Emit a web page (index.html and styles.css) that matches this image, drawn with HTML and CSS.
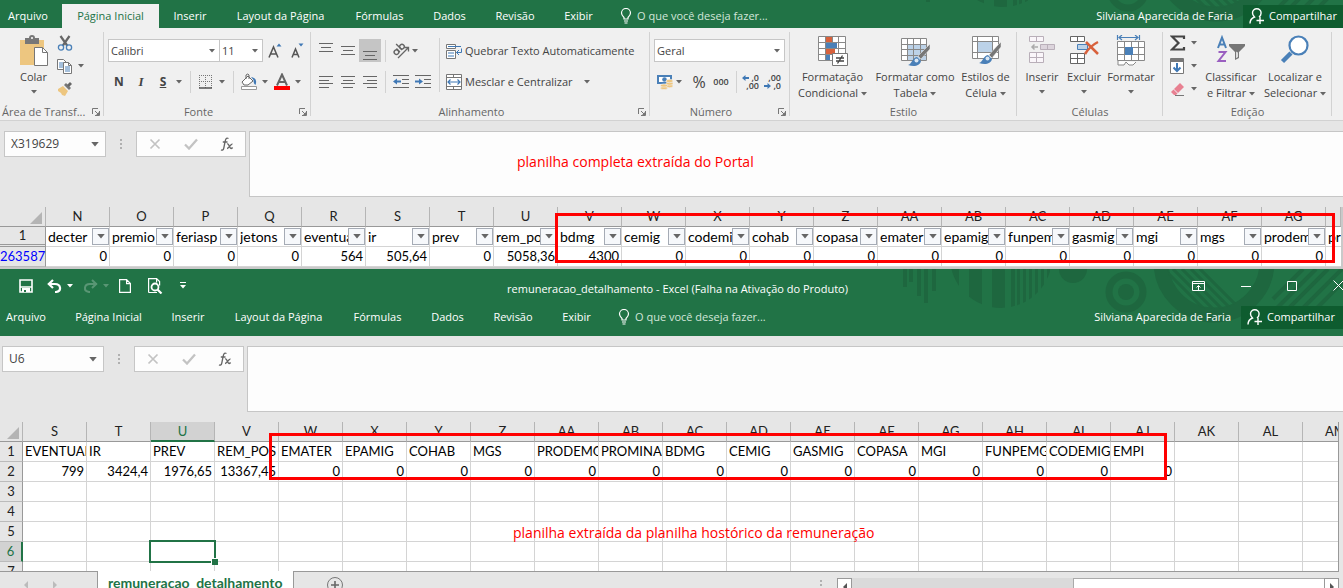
FILE: index.html
```html
<!DOCTYPE html>
<html lang="pt-BR">
<head>
<meta charset="utf-8">
<title>remuneracao_detalhamento - Excel</title>
<link rel="stylesheet" href="styles.css">
</head>
<body>
<svg class="defs" aria-hidden="true">
  <symbol id="down" viewBox="0 0 6 4"><path d="M0 0h6L3 3.500z" fill="currentColor"/></symbol>
  <symbol id="launch" viewBox="0 0 8 8"><path d="M.5 6V.5H6M3 3l3 3M7.500 3v4.500H3" fill="none" stroke="#777"/><path d="M7 4v3H4z" fill="#777"/></symbol>
  <symbol id="bulb" viewBox="0 0 12 16"><path d="M4 11V9.500C2.500 8 1.500 7 1.500 5a4.500 4.500 0 0 1 9 0c0 2-1 3-2.500 4.500V11zM4 13h4M4.500 15h3" fill="none" stroke="currentColor" stroke-width="1.200"/></symbol>
  <symbol id="person" viewBox="0 0 16 16"><path d="M1 15.500c0-4 2-5.500 4.500-6.500C4 7.500 3.500 6.500 3.500 5a4.300 4.300 0 0 1 8.600 0c0 1.500-.8 3-2.100 4M11 9v7M7.500 12.500H15" fill="none" stroke="currentColor" stroke-width="1.400"/></symbol>
  <symbol id="cancel" viewBox="0 0 12 12"><path d="M1.500 1.500l9 9M10.500 1.500l-9 9" stroke="#c3c3c3" stroke-width="1.700"/></symbol>
  <symbol id="check" viewBox="0 0 14 12"><path d="M1 6.500l4 4L13 1.500" fill="none" stroke="#c3c3c3" stroke-width="2.300"/></symbol>
  <symbol id="fx" viewBox="0 0 14 14"><path d="M8.500 1.500C6 .2 5.500 2.500 5 5L3.800 11c-.4 2-1.300 2.500-2.800 1.800M2.800 5h4.700M7 7c2-1 2.500 4.500 4 4.500.7 0 1.200-.5 1.600-1M12.500 7.200c-1.700-.6-3.500 4.300-5.500 4.300" fill="none" stroke="#666" stroke-width="1.300"/></symbol>
  <symbol id="corner" viewBox="0 0 12 12"><path d="M12 0v12H0z" fill="#b4b4b4"/></symbol>
  <symbol id="deco" viewBox="0 0 443 54">
    <clipPath id="disc"><circle cx="101" cy="-12" r="51"/></clipPath>
    <clipPath id="bigdisc"><circle cx="314" cy="-7" r="47"/></clipPath>
    <g fill="#1e673f" stroke="none">
      <path d="M3 0h4v18H3zM9 0h4v13H9zM17 0h4v27h-4zM24 0h4v34h-4zM32 0h4v22h-4z"/>
      <path clip-path="url(#disc)" d="M51 0h8v54h-8zM69 0h13v54H69zM92 0h13v54H92zM111 0h4v54h-4zM117 0h3v54h-3zM123 0h3v54h-3zM129 0h3v54h-3zM135 0h3v54h-3zM141 0h3v54h-3zM147 0h3v54h-3z"/>
      <circle cx="173" cy="0" r="14"/><circle cx="226" cy="23" r="8"/>
    </g>
    <g fill="none" stroke="#1e673f">
      <circle cx="226" cy="23" r="17" stroke-width="7"/>
      <circle cx="314" cy="-7" r="53" stroke-width="15"/>
      <path clip-path="url(#bigdisc)" stroke-width="3" d="M264 0l56 56M273 0l56 56M282 0l56 56M291 0l56 56M300 0l56 56"/>
      <path stroke-width="4" d="M373 30L403 0M373 43L416 0M374 54L428 0M388 54L442 0M402 54L443 13"/>
    </g>
  </symbol>
</svg>

<section class="window first">
  <header class="bar">
    <svg class="deco" aria-hidden="true"><use href="#deco"/></svg>
    <nav class="tabs">
      <button>Arquivo</button><button class="active">Página Inicial</button><button>Inserir</button><button>Layout da Página</button><button>Fórmulas</button><button>Dados</button><button>Revisão</button><button>Exibir</button>
    </nav>
    <button class="tell"><svg width="12" height="16"><use href="#bulb"/></svg>O que você deseja fazer...</button>
    <span class="user">Silviana Aparecida de Faria</span>
    <button class="share"><svg width="16" height="16"><use href="#person"/></svg>Compartilhar</button>
  </header>

  <div class="ribbon">
    <section class="group clipboard">
      <div class="tools">
        <button class="big"><svg width="30" height="32" viewBox="0 0 30 32"><path d="M1 5h24v25H1z" fill="#edc680"/><path d="M6 3h4a3 3 0 0 1 6 0h4v6H6z" fill="#777"/><circle cx="13" cy="3" r="1" fill="#fff"/><path d="M15.500 12.500h8l5 5v13h-13z" fill="#fff" stroke="#777"/><path d="M23.500 12.500v5h5" fill="none" stroke="#777"/></svg><span>Colar</span><svg class="arrow"><use href="#down"/></svg></button>
        <div class="stack">
          <button aria-label="Recortar"><svg width="16" height="16" viewBox="0 0 16 16"><path d="M3.500 1l7 10M12.500 1l-7 10" stroke="#666" stroke-width="2.200"/><circle cx="4" cy="12.500" r="2.600" fill="#f0f0f0" stroke="#4a80b8" stroke-width="1.300"/><circle cx="12" cy="12.500" r="2.600" fill="#f0f0f0" stroke="#4a80b8" stroke-width="1.300"/></svg></button>
          <button aria-label="Copiar"><svg width="16" height="16" viewBox="0 0 16 16"><path d="M.5 1.500h6l3 3v7h-9z" fill="#fff" stroke="#777"/><path d="M2 5h5M2 7h4M2 9h4" stroke="#4a80b8"/><path d="M6.500 4.500h5l3 3v8h-8z" fill="#fff" stroke="#777"/><path d="M11.500 4.500v3h3" fill="none" stroke="#777"/><path d="M8 9h5M8 11h5M8 13h5" stroke="#4a80b8"/></svg></button><svg class="arrow"><use href="#down"/></svg>
          <button aria-label="Pincel de Formatação"><svg width="16" height="16" viewBox="0 0 16 16"><path d="M1 8l5-3 5 5-3 5-3-1-1-2-3-2z" fill="#edc680"/><path d="M7 4l5 5 2-2-5-5z" fill="#777"/><path d="M10 4l3-3 2 2-3 3z" fill="#666"/></svg></button>
        </div>
      </div>
      <h2>Área de Transf...</h2><button class="launch" aria-label="Opções da Área de Transferência"><svg width="8" height="8"><use href="#launch"/></svg></button>
    </section>

    <section class="group font">
      <div class="tools rows">
        <div class="line">
          <label class="combo wide"><select aria-label="Fonte"><option>Calibri</option></select><svg class="arrow"><use href="#down"/></svg></label>
          <label class="combo size"><select aria-label="Tamanho"><option>11</option></select><svg class="arrow"><use href="#down"/></svg></label>
          <button class="ic grow" aria-label="Aumentar Fonte"><svg width="16" height="18" viewBox="0 0 16 18"><path d="M2 15.500L6.500 5 11 15.500M3.500 12h6" fill="none" stroke="#555" stroke-width="1.500"/><path d="M9.500 4.500h5L12 1.500z" fill="#3f78b5"/></svg></button>
          <button class="ic" aria-label="Diminuir Fonte"><svg width="16" height="18" viewBox="0 0 16 18"><path d="M3 15.500L6.500 7 10 15.500M4 12.500h5" fill="none" stroke="#555" stroke-width="1.500"/><path d="M9.500 1.500h5L12 4.500z" fill="#3f78b5"/></svg></button>
        </div>
        <div class="line">
          <button class="ic"><b>N</b></button><button class="ic"><i>I</i></button><button class="ic"><u>S</u></button><svg class="arrow"><use href="#down"/></svg>
          <i class="vr"></i>
          <button class="ic" aria-label="Bordas"><svg width="14" height="14" viewBox="0 0 14 14"><path d="M.5 0v13M6.500 0v13M12.500 0v13M0 .5h13M0 6.500h13" stroke="#777" stroke-dasharray="1 1"/><path d="M0 13h13" stroke="#555" stroke-width="1.500"/></svg></button><svg class="arrow"><use href="#down"/></svg>
          <i class="vr"></i>
          <button class="ic" aria-label="Cor de Preenchimento"><svg width="18" height="18" viewBox="0 0 18 18"><path d="M2 9l6-6 5 5-5 4H4z" fill="#fff" stroke="#666"/><path d="M6 6V2q2-2 3 0v4" fill="none" stroke="#666"/><path d="M11 4q7 1 4.500 8-2-1-2-5z" fill="#3f78b5"/><path d="M1.500 13.500h15v3h-15z" fill="#fff" stroke="#999"/></svg></button><svg class="arrow"><use href="#down"/></svg>
          <button class="ic" aria-label="Cor da Fonte"><svg width="18" height="18" viewBox="0 0 18 18"><path d="M4 12.500L9 1.500l5 11M5.500 9h7" fill="none" stroke="#666" stroke-width="2"/><path d="M1 13h16v4H1z" fill="#f00"/></svg></button><svg class="arrow"><use href="#down"/></svg>
        </div>
      </div>
      <h2>Fonte</h2><button class="launch" aria-label="Opções de Fonte"><svg width="8" height="8"><use href="#launch"/></svg></button>
    </section>

    <section class="group align">
      <div class="tools">
        <div class="rows">
          <div class="line">
            <button class="ic" aria-label="Alinhar em Cima"><svg width="14" height="18" viewBox="0 0 14 18"><path d="M0 1.500h14M2 5.500h10M0 9.500h14" stroke="#666"/></svg></button>
            <button class="ic" aria-label="Alinhar no Meio"><svg width="14" height="18" viewBox="0 0 14 18"><path d="M0 4.500h14M2 8.500h10M0 12.500h14" stroke="#666"/></svg></button>
            <button class="ic pressed" aria-label="Alinhar Embaixo"><svg width="14" height="18" viewBox="0 0 14 18"><path d="M0 9.500h14M2 13.500h10M0 17.500h14" stroke="#666"/></svg></button>
            <i class="vr"></i>
            <button class="ic" aria-label="Orientação"><svg width="18" height="18" viewBox="0 0 18 18"><g fill="none" stroke="#666" stroke-width="1.400" transform="rotate(-45 8 8)"><circle cx="4" cy="7" r="2.300"/><path d="M6.500 4.500v5M9.500 1v8.500"/><circle cx="11.800" cy="7" r="2.300"/></g><path d="M6 16L16 6M12.500 5.500h4v4" fill="none" stroke="#666" stroke-width="1.300"/></svg></button><svg class="arrow"><use href="#down"/></svg>
          </div>
          <div class="line">
            <button class="ic" aria-label="Alinhar à Esquerda"><svg width="14" height="12" viewBox="0 0 14 12"><path d="M0 .5h14M0 4.500h10M0 7.500h14M0 11.500h10" stroke="#666"/></svg></button>
            <button class="ic" aria-label="Centralizar"><svg width="14" height="12" viewBox="0 0 14 12"><path d="M0 .5h14M2 4.500h10M0 7.500h14M2 11.500h10" stroke="#666"/></svg></button>
            <button class="ic" aria-label="Alinhar à Direita"><svg width="14" height="12" viewBox="0 0 14 12"><path d="M0 .5h14M4 4.500h10M0 7.500h14M4 11.500h10" stroke="#666"/></svg></button>
            <i class="vr"></i>
            <button class="ic" aria-label="Diminuir Recuo"><svg width="16" height="14" viewBox="0 0 16 14"><path d="M0 .5h16M9 4.500h7M9 8.500h7M0 12.500h16" stroke="#666"/><path d="M0 6.500l4-3v2h4v2H4v2z" fill="#3f78b5"/></svg></button>
            <button class="ic" aria-label="Aumentar Recuo"><svg width="16" height="14" viewBox="0 0 16 14"><path d="M0 .5h16M9 4.500h7M9 8.500h7M0 12.500h16" stroke="#666"/><path d="M8 6.500l-4-3v2H0v2h4v2z" fill="#3f78b5"/></svg></button>
          </div>
        </div>
        <div class="rows texts">
          <button class="line"><svg width="16" height="16" viewBox="0 0 16 16"><path d="M.5 1.500h9v4h-9zM.5 7.500h9v8h-9z" fill="#fff" stroke="#777"/><path d="M2 3.500h13M2 10h6M2 13h6M15.500 5.500v4h-5M13 7l-2.500 2.500L13 12" fill="none" stroke="#3f78b5"/></svg>Quebrar Texto Automaticamente</button>
          <button class="line"><svg width="16" height="16" viewBox="0 0 16 16"><path d="M.5.500h15v15H.5zM.5 3.500h15M.5 12.500h15M7.500.500v3M7.500 12.500v3" fill="#fff" stroke="#777"/><path d="M2 8h12M4.500 5.500L2 8l2.500 2.500M11.500 5.500L14 8l-2.500 2.500" fill="none" stroke="#3f78b5" stroke-width="1.200"/></svg>Mesclar e Centralizar<svg class="arrow"><use href="#down"/></svg></button>
        </div>
      </div>
      <h2>Alinhamento</h2><button class="launch" aria-label="Opções de Alinhamento"><svg width="8" height="8"><use href="#launch"/></svg></button>
    </section>

    <section class="group number">
      <div class="tools rows">
        <div class="line"><label class="combo full"><select aria-label="Formato de Número"><option>Geral</option></select><svg class="arrow"><use href="#down"/></svg></label></div>
        <div class="line">
          <button class="ic" aria-label="Formato de Contabilização"><svg width="18" height="16" viewBox="0 0 18 16"><path d="M1 1h15v9H1z" fill="#4a80b8"/><path d="M3 3h11v5H3z" fill="#fff"/><circle cx="8.500" cy="5.500" r="2.300" fill="#4a80b8"/><g fill="#edc680" stroke="#f0f0f0" stroke-width=".6"><ellipse cx="13.500" cy="12" rx="3.500" ry="1.700"/><ellipse cx="13.500" cy="9.500" rx="3.500" ry="1.700"/><ellipse cx="13.500" cy="7" rx="3.500" ry="1.700"/><ellipse cx="8" cy="14" rx="3.500" ry="1.600"/><ellipse cx="8" cy="11.500" rx="3.500" ry="1.600"/></g></svg></button><svg class="arrow"><use href="#down"/></svg>
          <button class="ic percent">%</button><button class="ic zeros">000</button>
          <i class="vr"></i>
          <button class="ic dec" aria-label="Aumentar Casas Decimais"><span class="d1">,0</span><span>,00</span><svg width="8" height="6" viewBox="0 0 8 6"><path d="M0 3l3.500-3v2H7v2H3.500v2z" fill="#3f78b5"/></svg></button>
          <button class="ic dec less" aria-label="Diminuir Casas Decimais"><span>,00</span><span class="d1">,0</span><svg width="8" height="6" viewBox="0 0 8 6"><path d="M7 3L3.500 0v2H0v2h3.500v2z" fill="#3f78b5"/></svg></button>
        </div>
      </div>
      <h2>Número</h2><button class="launch" aria-label="Opções de Número"><svg width="8" height="8"><use href="#launch"/></svg></button>
    </section>

    <section class="group style">
      <div class="tools">
        <button class="big"><svg width="32" height="32" viewBox="0 0 32 32"><path d="M1.500 1.500h27v24h-27zM8.500 1.500v24M15.500 1.500v24M21.500 1.500v24M1.500 7.500h27M1.500 13.500h27M1.500 19.500h27" fill="#fff" stroke="#888"/><path d="M9 2h6v5H9zM9 14h9v5H9z" fill="#d8613c"/><path d="M9 8h11v5H9zM9 20h4v5H9z" fill="#4a80b8"/><path d="M15.500 18.500h15v12h-15z" fill="#fff" stroke="#777"/><path d="M19 23h8M19 26h8M25.500 20.500l-5 8" stroke="#444" stroke-width="1.300"/></svg><span>Formatação<br>Condicional <svg class="arrow"><use href="#down"/></svg></span></button>
        <button class="big"><svg width="32" height="32" viewBox="0 0 32 32"><path d="M2.500 3.500h25v22h-25z" fill="#fff"/><path d="M8 9h19v16H8z" fill="#bcd2e8"/><path d="M2.500 3.500h25v22h-25zM8.500 3.500v22M14.500 3.500v22M21.500 3.500v22M2.500 9.500h25M2.500 14.500h25M2.500 20.500h25" fill="none" stroke="#888"/><path d="M19 21l8-8 4-4v5l-9 10z" fill="#777" stroke="#f0f0f0" stroke-width=".5"/><path d="M9 30c4-1 4-7 9-8l4 4c-1 5-7 6-13 4z" fill="#4a80b8"/><circle cx="17.500" cy="25.500" r="2" fill="#dbe7f3"/></svg><span>Formatar como<br>Tabela <svg class="arrow"><use href="#down"/></svg></span></button>
        <button class="big"><svg width="32" height="32" viewBox="0 0 32 32"><path d="M2.500 1.500h26v22h-26z" fill="#fff"/><path d="M8 7h14v10H8z" fill="#bcd2e8"/><path d="M2.500 1.500h26v22h-26zM7.500 1.500v22M22.500 1.500v22M2.500 6.500h26M2.500 17.500h26" fill="none" stroke="#888"/><path d="M19 20l8-9 4-4v5l-9 11z" fill="#777" stroke="#f0f0f0" stroke-width=".5"/><path d="M9 28c4-1 4-7 9-8l4 4c-1 5-7 6-13 4z" fill="#4a80b8"/><circle cx="17.500" cy="23.500" r="2" fill="#dbe7f3"/></svg><span>Estilos de<br>Célula <svg class="arrow"><use href="#down"/></svg></span></button>
      </div>
      <h2>Estilo</h2>
    </section>

    <section class="group cells">
      <div class="tools">
        <button class="big"><svg width="30" height="32" viewBox="0 0 30 32"><path d="M2.500 1.500h14v5h-14zM9.500 1.500v5M2.500 17.500h14v10h-14zM9.500 17.500v10M2.500 22.500h14" fill="#faf6fa" stroke="#b9afb9"/><path d="M13.500 9.500h14v5h-14zM20.500 9.500v5" fill="#dcd4dc" stroke="#b9afb9"/><path d="M11 12H5M7.500 9.500L5 12l2.500 2.500" fill="none" stroke="#aaa" stroke-width="1.500"/></svg><span>Inserir</span><svg class="arrow"><use href="#down"/></svg></button>
        <button class="big"><svg width="30" height="32" viewBox="0 0 30 32"><path d="M1.500 1.500h14v5h-14zM8.500 1.500v5M1.500 18.500h14v10h-14zM8.500 18.500v10M1.500 23.500h14" fill="#fff" stroke="#666"/><path d="M8.500 9.500h10v5h-10z" fill="#bcd2e8" stroke="#4a80b8"/><path d="M17 7q5 5 12 12M29 7q-8 4-13 12" fill="none" stroke="#d8613c" stroke-width="2.500"/></svg><span>Excluir</span><svg class="arrow"><use href="#down"/></svg></button>
        <button class="big"><svg width="30" height="32" viewBox="0 0 30 32"><path d="M1.500 6.500h27v19h-27zM8.500 6.500v19M15.500 6.500v19M22.500 6.500v19M1.500 12.500h27M1.500 19.500h27" fill="#fff" stroke="#888"/><path d="M9 12h8v8H9z" fill="#4a80b8"/><path d="M2 26v4h6l2-3 3 3h4l3-3" fill="#fff" stroke="#888"/><path d="M1.500 0v5M23.500 0v5M3 2.500h19M6 0L3 2.500 6 5M19 0l3 2.500L19 5" fill="none" stroke="#4a80b8" stroke-width="1.200"/></svg><span>Formatar</span><svg class="arrow"><use href="#down"/></svg></button>
      </div>
      <h2>Células</h2>
    </section>

    <section class="group edit">
      <div class="tools">
        <div class="stack">
          <button aria-label="AutoSoma"><svg width="16" height="16" viewBox="0 0 16 16"><path d="M14 4V1.500H2L8.500 8 2 14.500h12V12" fill="none" stroke="#444" stroke-width="2.200"/></svg></button><svg class="arrow"><use href="#down"/></svg>
          <button aria-label="Preencher"><svg width="14" height="16" viewBox="0 0 14 16"><path d="M.5.500h13v15H.5z" fill="#fff" stroke="#777"/><path d="M1 1h12v3H1z" fill="#777"/><path d="M7 5v8M3.500 9.500L7 13l3.500-3.500" fill="none" stroke="#3f78b5" stroke-width="2"/></svg></button><svg class="arrow"><use href="#down"/></svg>
          <button aria-label="Limpar"><svg width="14" height="14" viewBox="0 0 14 14"><path d="M4 7l6-6 4 4-6 6z" fill="#e88091"/><path d="M1 10l2.500-2.500 4 4L6 13H4z" fill="#e88091"/><path d="M5 13.500h9" stroke="#777"/></svg></button><svg class="arrow"><use href="#down"/></svg>
        </div>
        <button class="big sort"><svg width="30" height="32" viewBox="0 0 30 32"><path d="M2 13L6 2.500 10 13M3.500 9.500h5" fill="none" stroke="#4a80b8" stroke-width="2"/><path d="M2.500 17h7l-7 9h7.500" fill="none" stroke="#9a5fc0" stroke-width="2"/><path d="M13 9h16v2l-6 6v6l-4 2v-8l-6-6z" fill="#777"/><path d="M20 16.500l1.500 1 .5-.5v5l-2 1.200z" fill="#ddd"/></svg><span>Classificar<br>e Filtrar <svg class="arrow"><use href="#down"/></svg></span></button>
        <button class="big find"><svg width="30" height="32" viewBox="0 0 30 32"><path d="M11 18L2.500 26.500" stroke="#4a80b8" stroke-width="4.500"/><circle cx="18.500" cy="10.500" r="9" fill="#fff" stroke="#4a80b8" stroke-width="2.200"/></svg><span>Localizar e<br>Selecionar <svg class="arrow"><use href="#down"/></svg></span></button>
      </div>
      <h2>Edição</h2>
    </section>
  </div>

  <div class="formula">
    <label class="namebox"><input aria-label="Caixa de Nome" value="X319629"><svg width="8" height="5"><use href="#down"/></svg></label>
    <i class="dots"></i>
    <div class="fbuttons"><button aria-label="Cancelar"><svg width="12" height="12"><use href="#cancel"/></svg></button><button aria-label="Inserir"><svg width="14" height="12"><use href="#check"/></svg></button><button aria-label="Inserir Função"><svg width="14" height="14"><use href="#fx"/></svg></button></div>
    <textarea class="finput" aria-label="Barra de Fórmulas"></textarea>
    <p class="note n1">planilha completa extraída do Portal</p>
  </div>

  <div class="sheet">
    <table>
      <colgroup><col class="rh"><col span="20" class="c"><col></colgroup>
      <thead><tr><th><svg class="corner" width="12" height="12"><use href="#corner"/></svg></th><th>N</th><th>O</th><th>P</th><th>Q</th><th>R</th><th>S</th><th>T</th><th>U</th><th>V</th><th>W</th><th>X</th><th>Y</th><th>Z</th><th>AA</th><th>AB</th><th>AC</th><th>AD</th><th>AE</th><th>AF</th><th>AG</th><th></th></tr></thead>
      <tbody>
        <tr class="filters"><th>1</th><td><div><span>decter</span><button><svg width="8" height="5"><use href="#down"/></svg></button></div></td><td><div><span>premio</span><button><svg width="8" height="5"><use href="#down"/></svg></button></div></td><td><div><span>feriasp</span><button><svg width="8" height="5"><use href="#down"/></svg></button></div></td><td><div><span>jetons</span><button><svg width="8" height="5"><use href="#down"/></svg></button></div></td><td><div><span>eventual</span><button><svg width="8" height="5"><use href="#down"/></svg></button></div></td><td><div><span>ir</span><button><svg width="8" height="5"><use href="#down"/></svg></button></div></td><td><div><span>prev</span><button><svg width="8" height="5"><use href="#down"/></svg></button></div></td><td><div><span>rem_pos</span><button><svg width="8" height="5"><use href="#down"/></svg></button></div></td><td><div><span>bdmg</span><button><svg width="8" height="5"><use href="#down"/></svg></button></div></td><td><div><span>cemig</span><button><svg width="8" height="5"><use href="#down"/></svg></button></div></td><td><div><span>codemig</span><button><svg width="8" height="5"><use href="#down"/></svg></button></div></td><td><div><span>cohab</span><button><svg width="8" height="5"><use href="#down"/></svg></button></div></td><td><div><span>copasa</span><button><svg width="8" height="5"><use href="#down"/></svg></button></div></td><td><div><span>emater</span><button><svg width="8" height="5"><use href="#down"/></svg></button></div></td><td><div><span>epamig</span><button><svg width="8" height="5"><use href="#down"/></svg></button></div></td><td><div><span>funpemg</span><button><svg width="8" height="5"><use href="#down"/></svg></button></div></td><td><div><span>gasmig</span><button><svg width="8" height="5"><use href="#down"/></svg></button></div></td><td><div><span>mgi</span><button><svg width="8" height="5"><use href="#down"/></svg></button></div></td><td><div><span>mgs</span><button><svg width="8" height="5"><use href="#down"/></svg></button></div></td><td><div><span>prodemg</span><button><svg width="8" height="5"><use href="#down"/></svg></button></div></td><td><div><span>pr</span></div></td></tr>
        <tr class="num"><th class="filtered">263587</th><td>0</td><td>0</td><td>0</td><td>0</td><td>564</td><td>505,64</td><td>0</td><td>5058,36</td><td>4300</td><td>0</td><td>0</td><td>0</td><td>0</td><td>0</td><td>0</td><td>0</td><td>0</td><td>0</td><td>0</td><td>0</td><td></td></tr>
      </tbody>
    </table>
    <div class="mark m1"></div>
  </div>
</section>

<section class="window second">
  <header>
    <svg class="deco" aria-hidden="true"><use href="#deco"/></svg>
    <div class="titlebar">
      <div class="quick">
        <button aria-label="Salvar"><svg width="14" height="14" viewBox="0 0 14 14"><path d="M1 1h12v12H1zM1 8h12" fill="none" stroke="#fff" stroke-width="1.600"/><path d="M3 9h8v4H3z" fill="#fff"/><path d="M5 11h2v2H5z" fill="#217346"/></svg></button>
        <button aria-label="Desfazer"><svg width="15" height="14" viewBox="0 0 15 14"><path d="M1 5h7c6 0 7 7 1 8H8M6 1L1.800 5 6 9" fill="none" stroke="#fff" stroke-width="2.200"/></svg></button><svg class="arrow"><use href="#down"/></svg>
        <button class="off" aria-label="Refazer"><svg width="15" height="14" viewBox="0 0 15 14"><path d="M14 5H7c-6 0-7 7-1 8h1M9 1l4.200 4L9 9" fill="none" stroke="#fff" stroke-width="2"/></svg></button><svg class="arrow off"><use href="#down"/></svg>
        <button aria-label="Novo"><svg width="12" height="14" viewBox="0 0 12 14"><path d="M.6.6h7l3.800 4v8.800H.6zM7.600.6v4h3.800" fill="none" stroke="#fff" stroke-width="1.200"/></svg></button>
        <button aria-label="Visualizar Impressão"><svg width="15" height="16" viewBox="0 0 15 16"><path d="M.6 14.500V.6h8l3 3v4M8.600.6v4M.6 14.500H9" fill="none" stroke="#fff" stroke-width="1.200"/><circle cx="7" cy="9" r="3.500" fill="none" stroke="#fff" stroke-width="1.800"/><path d="M9.500 11.500l4 4" stroke="#fff" stroke-width="2.200"/></svg></button>
        <button aria-label="Personalizar"><svg width="6" height="7" viewBox="0 0 6 7"><path d="M0 .5h6" stroke="#fff"/><path d="M0 3h6L3 6.500z" fill="#fff"/></svg></button>
      </div>
      <h1>remuneracao_detalhamento - Excel (Falha na Ativação do Produto)</h1>
      <div class="controls">
        <button aria-label="Opções da Faixa"><svg width="13" height="10" viewBox="0 0 13 10"><path d="M.5.500h12v9H.5zM.5 2.500h12M6.500 9V4.500M4.500 6.500l2-2 2 2" fill="none" stroke="#fff"/></svg></button>
        <button aria-label="Minimizar"><svg width="10" height="10" viewBox="0 0 10 10"><path d="M0 5.500h10" stroke="#fff"/></svg></button>
        <button aria-label="Maximizar"><svg width="10" height="10" viewBox="0 0 10 10"><path d="M.5.500h9v9h-9z" fill="none" stroke="#fff"/></svg></button>
        <button aria-label="Fechar"><svg width="11" height="11" viewBox="0 0 11 11"><path d="M.5.500l10 10M10.500.500l-10 10" stroke="#fff"/></svg></button>
      </div>
    </div>
    <div class="bar">
      <nav class="tabs">
        <button>Arquivo</button><button>Página Inicial</button><button>Inserir</button><button>Layout da Página</button><button>Fórmulas</button><button>Dados</button><button>Revisão</button><button>Exibir</button>
      </nav>
      <button class="tell"><svg width="12" height="16"><use href="#bulb"/></svg>O que você deseja fazer...</button>
      <span class="user">Silviana Aparecida de Faria</span>
      <button class="share"><svg width="16" height="16"><use href="#person"/></svg>Compartilhar</button>
    </div>
  </header>

  <div class="formula">
    <label class="namebox"><input aria-label="Caixa de Nome" value="U6"><svg width="8" height="5"><use href="#down"/></svg></label>
    <i class="dots"></i>
    <div class="fbuttons"><button aria-label="Cancelar"><svg width="12" height="12"><use href="#cancel"/></svg></button><button aria-label="Inserir"><svg width="14" height="12"><use href="#check"/></svg></button><button aria-label="Inserir Função"><svg width="14" height="14"><use href="#fx"/></svg></button></div>
    <textarea class="finput" aria-label="Barra de Fórmulas"></textarea>
  </div>

  <div class="sheet">
    <table>
      <colgroup><col class="rh"><col span="20" class="c"><col></colgroup>
      <thead><tr><th><svg class="corner" width="12" height="12"><use href="#corner"/></svg></th><th>S</th><th>T</th><th class="sel">U</th><th>V</th><th>W</th><th>X</th><th>Y</th><th>Z</th><th>AA</th><th>AB</th><th>AC</th><th>AD</th><th>AE</th><th>AF</th><th>AG</th><th>AH</th><th>AI</th><th>AJ</th><th>AK</th><th>AL</th><th class="last">AM</th></tr></thead>
      <tbody>
        <tr><th>1</th><td>EVENTUAL</td><td>IR</td><td>PREV</td><td class="over">REM_POS</td><td>EMATER</td><td>EPAMIG</td><td>COHAB</td><td>MGS</td><td>PRODEMG</td><td>PROMINAS</td><td>BDMG</td><td>CEMIG</td><td>GASMIG</td><td>COPASA</td><td>MGI</td><td>FUNPEMG</td><td>CODEMIG</td><td>EMPI</td><td></td><td></td><td></td></tr>
        <tr class="num"><th>2</th><td>799</td><td>3424,4</td><td>1976,65</td><td>13367,45</td><td>0</td><td>0</td><td>0</td><td>0</td><td>0</td><td>0</td><td>0</td><td>0</td><td>0</td><td>0</td><td>0</td><td>0</td><td>0</td><td>0</td><td></td><td></td><td></td></tr>
        <tr><th>3</th><td></td><td></td><td></td><td></td><td></td><td></td><td></td><td></td><td></td><td></td><td></td><td></td><td></td><td></td><td></td><td></td><td></td><td></td><td></td><td></td><td></td></tr>
        <tr><th>4</th><td></td><td></td><td></td><td></td><td></td><td></td><td></td><td></td><td></td><td></td><td></td><td></td><td></td><td></td><td></td><td></td><td></td><td></td><td></td><td></td><td></td></tr>
        <tr><th>5</th><td></td><td></td><td></td><td></td><td></td><td></td><td></td><td></td><td></td><td></td><td></td><td></td><td></td><td></td><td></td><td></td><td></td><td></td><td></td><td></td><td></td></tr>
        <tr><th class="sel">6</th><td></td><td></td><td class="cursor"><i></i></td><td></td><td></td><td></td><td></td><td></td><td></td><td></td><td></td><td></td><td></td><td></td><td></td><td></td><td></td><td></td><td></td><td></td><td></td></tr>
        <tr><th>7</th><td></td><td></td><td></td><td></td><td></td><td></td><td></td><td></td><td></td><td></td><td></td><td></td><td></td><td></td><td></td><td></td><td></td><td></td><td></td><td></td><td></td></tr>
      </tbody>
    </table>
    <div class="mark m2"></div>
    <p class="note n2">planilha extraída da planilha hostórico da remuneração</p>
  </div>

  <footer>
    <div class="nav"><svg width="4" height="8" viewBox="0 0 4 8"><path d="M4 0v8L0 4z" fill="#bbb"/></svg><svg width="4" height="8" viewBox="0 0 4 8"><path d="M0 0v8l4-4z" fill="#bbb"/></svg></div>
    <button class="sheettab">remuneracao_detalhamento</button>
    <div class="rest">
      <button class="add" aria-label="Nova planilha"><svg width="18" height="18" viewBox="0 0 18 18"><path d="M9 5v8M5 9h8" stroke="#666" stroke-width="1.600"/><circle cx="9" cy="9" r="7.500" fill="none" stroke="#777"/></svg></button>
      <i class="dots"></i>
      <div class="scroll"><button aria-label="Rolar à esquerda"><svg width="4" height="8" viewBox="0 0 4 8"><path d="M4 0v8L0 4z" fill="#555"/></svg></button><i class="thumb"></i><button aria-label="Rolar à direita"><svg width="4" height="8" viewBox="0 0 4 8"><path d="M0 0v8l4-4z" fill="#555"/></svg></button></div>
    </div>
  </footer>
</section>
</body>
</html>
```
FILE: styles.css
```css
* { box-sizing: border-box; }

body {
  margin: 0;
  height: 100vh;
  overflow: hidden;
  background: #e6e6e6;
  color: #444;
  font: 11px/16px "Open Sans", "Noto Sans", sans-serif;
}

button, input, select, textarea {
  font: inherit;
  color: inherit;
  margin: 0;
  padding: 0;
  border: 0;
  background: none;
  border-radius: 0;
}

svg { display: block; flex: none; }
.defs { position: absolute; width: 0; height: 0; }
.arrow { width: 6px; height: 4px; color: #666; }
h1, h2, p { margin: 0; font-size: inherit; font-weight: 400; }

/* Title and tabs */
header { position: relative; overflow: hidden; background: #217346; color: #fff; }
.deco { position: absolute; top: 0; right: 0; width: 443px; height: 54px; }
.first .deco { top: -32px; right: -2px; }
.bar { display: flex; height: 28px; align-items: center; }
.bar > * { position: relative; }
.bar .deco { position: absolute; }
.tabs {
  display: grid;
  grid-template-columns: 62px 97px 62px 119px 79px 61px 70px 57px;
  align-self: stretch;
}
.tabs button { padding-top: 4px; }
.tabs button:first-child { padding-right: 6px; }
.tabs .active { margin-top: 4px; padding: 0; background: #f0f0f0; color: #217346; }
.tell { display: flex; align-items: center; gap: 5px; margin-left: 13px; padding-top: 3px; color: #d3e6da; }
.tell svg { color: #fff; }
.user { margin-left: auto; padding-top: 4px; }
.share {
  display: flex;
  align-items: center;
  gap: 4px;
  width: 100px;
  height: 23px;
  margin-left: 10px;
  padding-left: 6px;
  background: #0e5c2f;
  white-space: nowrap;
}
.first .share { height: 23px; margin-top: 4px; }

/* Ribbon */
.ribbon { display: flex; height: 93px; background: #f0f0f0; border-bottom: 1px solid #d2d2d2; }
.group { position: relative; display: flex; flex-direction: column; height: 92px; flex: none; }
.group::after { content: ""; position: absolute; right: 0; top: 4px; bottom: 4px; border-right: 1px solid #d2d2d2; }
.clipboard { width: 104px; }
.font { width: 207px; }
.align { width: 339px; }
.number { width: 140px; }
.style { width: 227px; }
.cells { width: 146px; }
.edit { width: 169px; }
.group h2 { text-align: center; color: #666; line-height: 16px; margin-top: auto; }
.group:not(.clipboard) h2 { padding-right: 18px; }
.group.style h2, .group.cells h2, .group.edit h2 { padding-right: 0; }
.clipboard h2 { text-align: left; padding-left: 2px; }
.launch { position: absolute; right: 4px; bottom: 4px; }
.tools { display: flex; height: 76px; }
.rows { display: flex; flex-direction: column; gap: 8px; padding-top: 11px; }
.line { display: flex; align-items: center; height: 23px; }
.big { display: flex; flex-direction: column; align-items: center; padding-top: 7px; }
.big > span { white-space: nowrap; padding-top: 2px; }
.big > .arrow { margin-top: 5px; }
.big span .arrow { display: inline-block; vertical-align: middle; }
.ic { display: flex; align-items: center; justify-content: center; width: 22px; height: 23px; }
.vr { width: 1px; height: 22px; background: #d2d2d2; }
.pressed { background: #c5c5c5; }
.combo { position: relative; display: flex; height: 23px; border: 1px solid #c6c6c6; background: #fff; }
.combo select { flex: 1; width: 0; padding-left: 2px; appearance: none; font-size: 11px; }
.combo .arrow { position: absolute; right: 4px; top: 9px; }

.clipboard .big { width: 57px; padding-left: 10px; }
.stack { display: grid; grid-template-columns: 16px 6px; column-gap: 5px; row-gap: 0; grid-auto-rows: 23px; align-items: center; padding-top: 3px; }
.stack button { grid-column: 1; }

.font .rows { padding-left: 4px; }
.combo.wide { width: 112px; }
.combo.size { width: 44px; margin-left: -1px; }
.grow { margin-left: 1px; }
.font b, .font u { font-weight: 700; font-size: 12px; }
.font i:not(.vr) { font: italic 700 13px "Liberation Serif", serif; }
.font .vr { margin: 0 4px 0 8px; }
.font .ic + .arrow { margin-left: 2px; }
.font .arrow + .ic { margin-left: 3px; }

.align .tools > .rows:first-child { width: 128px; padding-left: 4px; border-right: 0; }
.align .vr { margin: 0 4px; }
.align .texts { position: relative; padding-left: 7px; }
.texts::before { content: ""; position: absolute; left: 0; top: 10px; height: 54px; border-left: 1px solid #d2d2d2; }
.texts .line { gap: 3px; white-space: nowrap; }
.texts .arrow { margin-left: 8px; }

.number .rows { padding-left: 4px; }
.combo.full { width: 131px; }
.percent { margin-left: 6px; font-size: 16px; }
.zeros { font-size: 9px; font-weight: 600; }
.number .vr { margin: 0 3px 0 4px; }
.dec { position: relative; flex-direction: column; align-items: flex-end; padding-right: 3px; font-size: 9px; line-height: 8px; font-weight: 600; }
.dec svg { position: absolute; left: 2px; top: 5px; }
.less svg { top: 13px; }

.style .big { width: 85px; }
.style .big:nth-child(2) { width: 80px; }
.style .big:nth-child(3) { width: 61px; }
.cells .big { width: 42px; }
.cells .big:first-child { margin-left: 4px; }
.cells .big:last-child { width: 52px; }
.edit .stack { padding-left: 7px; }
.sort { width: 68px; }
.find { width: 60px; }

/* Formula bar */
.formula { position: relative; display: flex; align-items: flex-start; height: 86px; padding: 10px 0 0 4px; background: #e6e6e6; }
.second .formula { padding-left: 2px; }
.namebox { display: flex; align-items: center; width: 102px; height: 26px; padding-right: 6px; border: 1px solid #c6c6c6; background: #fdfdfd; color: #666; }
.namebox input { flex: 1; width: 0; padding-left: 6px; font-size: 12px; color: #444; }
.dots { width: 2px; height: 10px; margin: 8px 14px; background: repeating-linear-gradient(#b0b0b0 0 2px, transparent 2px 4px); }
.fbuttons { display: flex; width: 110px; height: 26px; border: 1px solid #c6c6c6; background: #fdfdfd; }
.fbuttons button { flex: 1; display: flex; align-items: center; justify-content: center; }
.finput { flex: 1; height: 66px; margin-left: 3px; border: 1px solid #c6c6c6; border-right: 0; background: #fdfdfd; resize: none; }

/* Worksheet */
.sheet { position: relative; overflow: hidden; }
.first .sheet { height: 62px; padding-right: 2px; background: #c9c9c9; }
.second .sheet { height: 149px; margin-right: 4px; border-right: 1px solid #999; }
table { width: 100%; table-layout: fixed; border-collapse: separate; border-spacing: 0; font: 13px/19px Lato, "Open Sans", sans-serif; color: #000; }
.rh { width: 46px; }
.second .rh { width: 23px; }
.c { width: 64px; }
tr { height: 20px; }
th { height: 20px; padding: 0; font-weight: 400; background: #e6e6e6; border-right: 1px solid #999; border-bottom: 1px solid #bbb; color: #222; }
thead th { border-bottom-color: #999; border-right-color: #b5b5b5; }
.corner { margin: 2px 3px 0 auto; }
td { height: 20px; padding: 0 0 0 2px; background: #fff; border-right: 1px solid #d4d4d4; border-bottom: 1px solid #d4d4d4; white-space: nowrap; overflow: hidden; }
.num td { text-align: right; padding: 0 2px 0 0; }
.num td, td.over { overflow: visible; }
.first .filters th { border-bottom: 3px double #999; line-height: 17px; }
.filters div { display: flex; height: 19px; }
.filters span { flex: 1; overflow: hidden; font-size: 14px; }
.filters button { display: flex; align-items: center; justify-content: center; width: 17px; height: 17px; border: 1px solid #a5abb5; background: #f6f8fb; color: #666; margin-top: 1px; }
.filtered { color: #00f; }
th.sel { background: #d2d2d2; color: #217346; }
thead th.sel { border-bottom: 2px solid #217346; line-height: 18px; }
tbody th.sel { border-right: 2px solid #217346; }
th.last { text-align: left; padding-left: 22px; overflow: hidden; border-right: 0; }
td:last-child { border-right: 0; }
.cursor { position: relative; overflow: visible; }
.cursor i { position: absolute; inset: -2px; border: 2px solid #217346; }
.cursor i::after { content: ""; position: absolute; right: -4px; bottom: -4px; width: 6px; height: 6px; border: 1px solid #fff; border-width: 1px 0 0 1px; background: #217346; }

/* Annotations over the sheets */
.mark { position: absolute; border: 3px solid #f00; }
.m1 { left: 555px; top: 6px; width: 780px; height: 50px; }
.m2 { left: 269px; top: 11px; width: 898px; height: 47px; }
.note { position: absolute; color: #f00; white-space: nowrap; font: 14px/16px "Open Sans", sans-serif; }
.n1 { left: 517px; top: 33px; }
.n2 { left: 513px; top: 103px; }

/* Second window */
.second header { height: 67px; }
.titlebar { position: relative; display: flex; justify-content: space-between; height: 34px; }
.titlebar h1 { position: absolute; left: 0; right: 0; top: 12px; padding-left: 12px; text-align: center; }
.quick { position: relative; display: flex; align-items: center; height: 33px; padding-left: 19px; }
.quick button { margin-right: 14px; }
.quick button:has(+ .arrow) { margin-right: 5px; }
.quick .arrow { color: #fff; margin-right: 10px; }
.quick button:nth-of-type(4), .quick button:nth-of-type(5) { margin-right: 17px; }
.off { opacity: .25; }
.controls { position: relative; display: flex; align-items: center; height: 33px; gap: 36px; margin-right: -1px; }
.second .tabs { margin-left: -2px; }
.second .tabs button, .second .user { padding-top: 0; }
.second .tell { padding-top: 0; }
.second .share { width: 102px; }

/* Sheet tabs */
footer { display: flex; height: 17px; overflow: hidden; }
.nav { display: flex; gap: 25px; width: 98px; padding: 9px 0 0 24px; border-top: 1px solid #999; border-right: 1px solid #999; }
.sheettab { height: 24px; padding: 0 10px; background: #fff; color: #217346; font: 700 14px/24px Lato, sans-serif; border-right: 1px solid #999; }
.rest { flex: 1; display: flex; border-top: 1px solid #999; margin-right: 4px; }
.add { align-self: flex-start; margin: 4px 0 0 32px; }
.rest .dots { margin: 8px 15px 0 auto; }
.scroll { display: flex; flex: none; width: 48%; height: 18px; margin-top: 6px; background: #dadada; }
.scroll button { display: flex; align-items: center; justify-content: center; width: 15px; border: 1px solid #999; background: #fff; }
.thumb { width: 50%; margin-left: auto; border: 1px solid #aaa; border-right: 0; background: #fff; }
```
